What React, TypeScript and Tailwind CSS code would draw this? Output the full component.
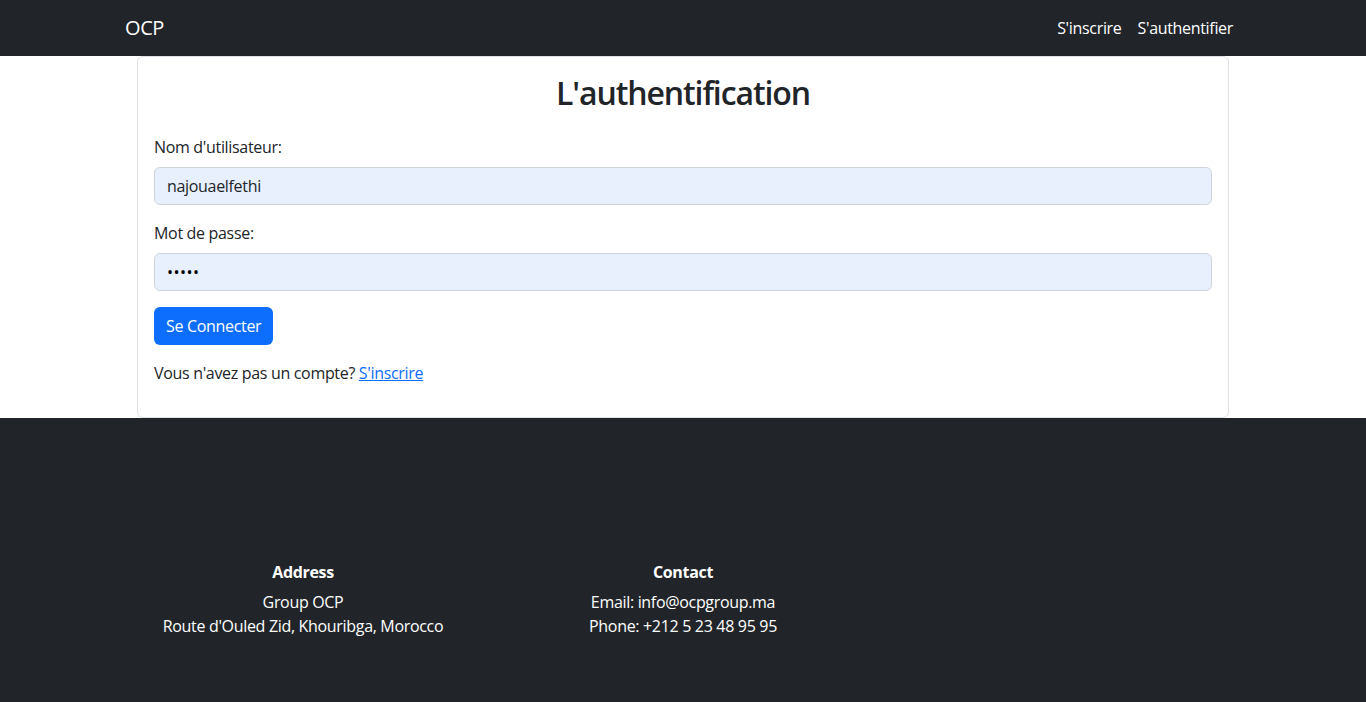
import React from "react";

export default function App() {
  const font = { fontFamily: '"Open Sans", "Noto Sans", sans-serif' };
  return (
    <div className="min-h-[702px] bg-white tracking-[-0.32px] text-[#212529]" style={font}>
      <nav className="h-[56px] bg-[#212529]">
        <div className="mx-auto flex h-full w-[1140px] items-center justify-between px-[12px]">
          <span className="text-[20px] leading-[30px] tracking-[-0.4px] text-white">OCP</span>
          <div className="flex">
            <a className="px-[8px] text-[16px] leading-[24px] text-white">S'inscrire</a>
            <a className="px-[8px] text-[16px] leading-[24px] text-white">S'authentifier</a>
          </div>
        </div>
      </nav>
      <div className="mx-auto w-[1140px] px-[24px]">
        <div className="rounded-[6px] border border-[#dee2e6] px-[16px] pb-[16px] pt-[17px]">
          <h2 className="mb-[23px] text-center text-[32px] font-semibold leading-[38px] tracking-[-1.1px]">L'authentification</h2>
          <div className="mb-[16px]">
            <label className="mb-[8px] block text-[16px] leading-[24px]">Nom d'utilisateur:</label>
            <div className="flex h-[38px] items-center rounded-[6px] border border-[#ced4da] bg-[#e8f0fe] px-[12px] text-[16px]">najouaelfethi</div>
          </div>
          <div className="mb-[16px]">
            <label className="mb-[8px] block text-[16px] leading-[24px]">Mot de passe:</label>
            <div className="flex h-[38px] items-center rounded-[6px] border border-[#ced4da] bg-[#e8f0fe] px-[12px] text-[16px] tracking-[0.5px] text-black">•••••</div>
          </div>
          <button className="mb-[16px] h-[38px] rounded-[6px] bg-[#0d6efd] px-[12px] text-[16px] text-white">Se Connecter</button>
          <p className="mb-[16px] text-[16px] leading-[24px]">
            Vous n'avez pas un compte? <a className="text-[#0d6efd] underline">S'inscrire</a>
          </p>
        </div>
      </div>
      <footer className="h-[285px] bg-[#212529] pt-[142px] text-white">
        <div className="mx-auto grid w-[1140px] grid-cols-3">
          <div className="text-center">
            <h5 className="mb-[6px] text-[16px] font-bold leading-[24px]">Address</h5>
            <p className="text-[16px] leading-[24px]">Group OCP</p>
            <p className="text-[16px] leading-[24px]">Route d'Ouled Zid, Khouribga, Morocco</p>
          </div>
          <div className="text-center">
            <h5 className="mb-[6px] text-[16px] font-bold leading-[24px]">Contact</h5>
            <p className="text-[16px] leading-[24px]">Email: info@ocpgroup.ma</p>
            <p className="text-[16px] leading-[24px]">Phone: +212 5 23 48 95 95</p>
          </div>
          <div />
        </div>
      </footer>
    </div>
  );
}
